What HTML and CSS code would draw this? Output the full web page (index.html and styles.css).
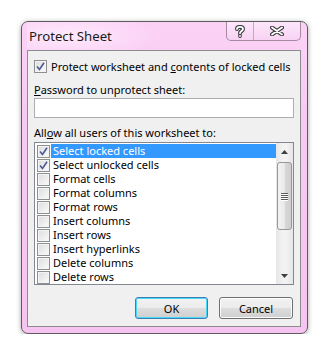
FILE: index.html
```html
<!DOCTYPE html>
<html>
<head>
<meta charset="utf-8">
<link rel="stylesheet" href="styles.css">
</head>
<body>
<div class="window">
  <div class="titlebar">
    <span class="title">Protect Sheet</span>
    <div class="caption">
      <div class="cbtn help">
        <svg width="10" height="13" viewBox="0 0 10 13">
          <path d="M2 4 C2 1.2 8 1.2 8 4 C8 6 5 6 5 8.2" fill="none" stroke="#3c3c3c" stroke-width="4" stroke-linecap="round"/>
          <circle cx="5" cy="11" r="1.9" fill="#3c3c3c"/>
          <path d="M2 4 C2 1.2 8 1.2 8 4 C8 6 5 6 5 8.2" fill="none" stroke="#fff" stroke-width="1.8" stroke-linecap="round"/>
          <circle cx="5" cy="11" r="0.9" fill="#fff"/>
        </svg>
      </div>
      <div class="cbtn close">
        <svg width="14" height="10" viewBox="0 0 14 10">
          <path d="M2 1.5 L12 8.5 M12 1.5 L2 8.5" stroke="#3c3c3c" stroke-width="4" stroke-linecap="round"/>
          <path d="M2 1.5 L12 8.5 M12 1.5 L2 8.5" stroke="#fff" stroke-width="1.8" stroke-linecap="round"/>
        </svg>
      </div>
    </div>
  </div>
  <div class="client">
    <div class="check-row">
      <span class="cb checked"><svg width="9" height="9" viewBox="0 0 9 9"><path d="M1 4.5 L3.5 7.5 L8 0.8" fill="none" stroke="#4a5a94" stroke-width="1.6"/></svg></span>
      <span class="lbl">Protect worksheet and <u>c</u>ontents of locked cells</span>
    </div>
    <div class="field-label"><u>P</u>assword to unprotect sheet:</div>
    <div class="input"></div>
    <div class="field-label allow">All<u>o</u>w all users of this worksheet to:</div>
    <div class="listbox">
      <div class="items">
        <div class="item sel"><span class="cb checked"><svg width="9" height="9" viewBox="0 0 9 9"><path d="M1 4.5 L3.5 7.5 L8 0.8" fill="none" stroke="#4a5a94" stroke-width="1.6"/></svg></span><span class="txt">Select locked cells</span></div>
        <div class="item"><span class="cb checked"><svg width="9" height="9" viewBox="0 0 9 9"><path d="M1 4.5 L3.5 7.5 L8 0.8" fill="none" stroke="#4a5a94" stroke-width="1.6"/></svg></span><span class="txt">Select unlocked cells</span></div>
        <div class="item"><span class="cb"></span><span class="txt">Format cells</span></div>
        <div class="item"><span class="cb"></span><span class="txt">Format columns</span></div>
        <div class="item"><span class="cb"></span><span class="txt">Format rows</span></div>
        <div class="item"><span class="cb"></span><span class="txt">Insert columns</span></div>
        <div class="item"><span class="cb"></span><span class="txt">Insert rows</span></div>
        <div class="item"><span class="cb"></span><span class="txt">Insert hyperlinks</span></div>
        <div class="item"><span class="cb"></span><span class="txt">Delete columns</span></div>
        <div class="item"><span class="cb"></span><span class="txt">Delete rows</span></div>
      </div>
      <div class="scrollbar">
        <div class="arrow up"><svg width="7" height="4" viewBox="0 0 7 4"><path d="M0 4 L3.5 0 L7 4 Z" fill="#404040"/></svg></div>
        <div class="track">
          <div class="thumb">
            <div class="grip"><i></i><i></i><i></i><i></i></div>
          </div>
        </div>
        <div class="arrow down"><svg width="7" height="4" viewBox="0 0 7 4"><path d="M0 0 L7 0 L3.5 4 Z" fill="#404040"/></svg></div>
      </div>
    </div>
    <div class="buttons">
      <div class="btn default">OK</div>
      <div class="btn">Cancel</div>
    </div>
  </div>
</div>
</body>
</html>
```

FILE: styles.css
```css
* { box-sizing: border-box; }
html, body { margin: 0; padding: 0; background: #fff; }
body {
  font-family: "Noto Sans", "Open Sans", sans-serif;
  font-size: 11px;
  color: #000;
  padding: 21px 0 0 21px;
}
.window {
  width: 287px;
  height: 313px;
  border: 1px solid #5e5a5e;
  border-radius: 7px;
  background: linear-gradient(180deg, #fbd2f6 0%, #f8caf3 30%, #f5c4f0 100%);
  padding: 0 6px 6px 5px;
  box-shadow: 0 1px 5px rgba(0,0,0,0.35);
  display: flex;
  flex-direction: column;
}
.titlebar {
  height: 28px;
  display: flex;
  justify-content: space-between;
  align-items: flex-start;
  background: radial-gradient(ellipse 90px 22px at 40px 14px, rgba(255,240,253,0.8), rgba(255,240,253,0));
}
.title {
  font-size: 13.2px;
  line-height: 17px;
  margin: 6px 0 0 2px;
  color: #1a1a1a;
  white-space: nowrap;
}
.caption {
  display: flex;
  height: 19px;
  border: 1px solid #a58aa2;
  border-top: none;
  border-radius: 0 0 5px 5px;
  background: linear-gradient(180deg, #fde6fb, #f7d3f3);
  overflow: hidden;
}
.cbtn {
  display: flex;
  align-items: center;
  justify-content: center;
}
.cbtn.help { width: 27px; border-right: 1px solid #c4a8c1; }
.cbtn.close { width: 46px; }
.client {
  flex: 1;
  background: #f0f0f0;
  border: 1px solid #8c8c8c;
  padding: 9px 6px 0 6px;
  display: flex;
  flex-direction: column;
}
.check-row {
  display: flex;
  align-items: center;
  height: 13px;
  white-space: nowrap;
}
.cb {
  width: 13px;
  height: 13px;
  border: 1px solid #8e8f8f;
  background: linear-gradient(135deg, #dcdcdc, #fbfbfb);
  box-shadow: inset 0 0 0 1px #f4f4f4;
  display: flex;
  align-items: center;
  justify-content: center;
  flex: none;
}
.lbl { margin-left: 4px; line-height: 13px; }
.field-label { margin-top: 9px; line-height: 15px; height: 15px; white-space: nowrap; }
.field-label.allow { margin-top: 7px; }
.input {
  margin-top: 1px;
  height: 20px;
  background: #fff;
  border: 1px solid #abadb3;
}
.listbox {
  margin-top: 2px;
  height: 143px;
  border: 1px solid #828790;
  background: #fff;
  display: flex;
}
.items {
  flex: 1;
  padding: 1px 0 0 2px;
  overflow: hidden;
}
.item {
  display: flex;
  align-items: center;
  height: 14px;
  white-space: nowrap;
}
.item .cb { width: 13px; height: 13px; }
.item .txt {
  margin-left: 1px;
  padding-left: 2px;
  flex: 1;
  line-height: 14px;
  height: 14px;
}
.item.sel .txt { background: #3399ff; color: #fff; }
.scrollbar {
  width: 17px;
  display: flex;
  flex-direction: column;
  background: linear-gradient(90deg, #e6e6e6, #f2f2f2 40%, #f2f2f2 60%, #e6e6e6);
}
.arrow {
  height: 17px;
  display: flex;
  align-items: center;
  justify-content: center;
}
.track { flex: 1; padding: 2px 1px 0 1px; }
.thumb {
  height: 68px;
  border: 1px solid #979797;
  border-radius: 3px;
  background: linear-gradient(90deg, #f3f3f3, #e9e9e9 50%, #d8d8d8 51%, #cfcfcf);
  display: flex;
  align-items: center;
  justify-content: center;
}
.grip { display: flex; flex-direction: column; gap: 1px; }
.grip i { display: block; width: 7px; height: 1px; background: #5a5a5a; box-shadow: 0 1px 0 #fff; }
.buttons {
  margin-top: 12px;
  display: flex;
  justify-content: flex-end;
  gap: 11px;
  padding-right: 1px;
}
.btn {
  width: 74px;
  height: 22px;
  border: 1px solid #707070;
  border-radius: 3px;
  background: linear-gradient(180deg, #f2f2f2 0%, #ebebeb 50%, #dddddd 51%, #cfcfcf 100%);
  box-shadow: inset 0 0 0 1px #fcfcfc;
  display: flex;
  align-items: center;
  justify-content: center;
  line-height: 15px;
}
.btn.default {
  width: 73px;
  border-color: #3c7fb1;
  box-shadow: inset 0 0 0 1px #48d8fb;
}
```
